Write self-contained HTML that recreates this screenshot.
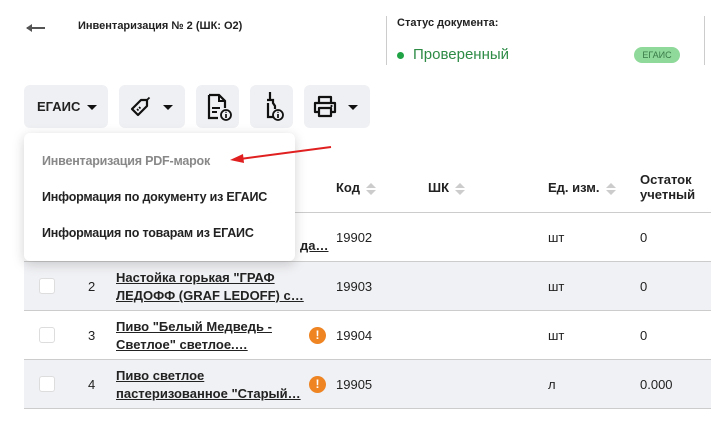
<!DOCTYPE html>
<html><head><meta charset="utf-8"><style>
*{box-sizing:border-box;margin:0;padding:0}
body{width:711px;height:437px;background:#fff;font-family:"Liberation Sans",sans-serif;color:#222;position:relative;overflow:hidden;font-size:13px}
.a{position:absolute}
.btn{position:absolute;top:85px;height:43px;background:#eff0f3;border-radius:6px}
.caret{position:absolute;width:0;height:0;border-left:5px solid transparent;border-right:5px solid transparent;border-top:5px solid #111}
.row{position:absolute;left:24px;width:687px;height:49px;border-bottom:1px solid #ccc}
.cb{position:absolute;left:15px;top:16px;width:16px;height:16px;border:1px solid #ddd;border-radius:3px;background:#fff}
.num{position:absolute;left:64px;top:17px}
.nm{position:absolute;left:92px;top:7px;font-weight:bold;text-decoration:underline;line-height:18px;width:190px;white-space:nowrap;overflow:hidden}
.ex{position:absolute;left:285px;top:16px;width:17px;height:17px;border-radius:50%;background:#ee8422;color:#fff;font-weight:bold;font-size:12px;text-align:center;line-height:17px}
.c1{position:absolute;left:312px;top:17px}
.c2{position:absolute;left:524px;top:17px}
.c3{position:absolute;left:616px;top:17px}
.sort{display:inline-block;vertical-align:middle;margin-left:6px;width:10px;height:12px;position:relative}
.sort:before{content:"";position:absolute;top:0;left:0;border-left:5px solid transparent;border-right:5px solid transparent;border-bottom:5px solid #ccc}
.sort:after{content:"";position:absolute;bottom:0;left:0;border-left:5px solid transparent;border-right:5px solid transparent;border-top:5px solid #ccc}
.mi{position:absolute;left:18px;font-size:12.5px;font-weight:bold;color:#222;letter-spacing:-0.2px}
</style></head><body>
<div class="a" style="left:27px;top:27px;width:18px;height:2px;background:#555"></div>
<div class="a" style="left:26px;top:24px;width:0;height:0;border-top:4px solid transparent;border-bottom:4px solid transparent;border-right:6px solid #555"></div>
<div class="a" style="left:78px;top:20px;font-size:11px;font-weight:bold">Инвентаризация № 2 (ШК: О2)</div>
<div class="a" style="left:386px;top:16px;width:1px;height:49px;background:#ccc"></div>
<div class="a" style="left:704px;top:16px;width:1px;height:49px;background:#ccc"></div>
<div class="a" style="left:397px;top:17px;font-size:11px;font-weight:bold">Статус документа:</div>
<div class="a" style="left:397px;top:52px;width:7px;height:7px;border-radius:50%;background:#1fa345"></div>
<div class="a" style="left:413px;top:46px;font-size:15px;color:#2e8b46">Проверенный</div>
<div class="a" style="left:634px;top:47px;width:46px;height:16px;border-radius:8px;background:#8fd99a;color:#3a7a48;font-size:9px;text-align:center;line-height:16px">ЕГАИС</div>

<div class="btn" style="left:24px;width:84px"><span class="a" style="left:13px;top:14px;font-weight:bold;font-size:13px">ЕГАИС</span><div class="caret" style="left:63px;top:20px"></div></div>
<div class="btn" style="left:119px;width:66px">
<svg class="a" style="left:8px;top:9px" width="26" height="26" viewBox="0 0 26 26"><path d="M14 6h6v6l-9 9-6-6z" fill="none" stroke="#111" stroke-width="2.2" stroke-linejoin="round"/><path d="M19 7l3.5-3.5" stroke="#111" stroke-width="1.8"/><path d="M10 15l1.5 1.5M12 13l1.5 1.5" stroke="#111" stroke-width="1.6"/></svg>
<div class="caret" style="left:44px;top:20px"></div></div>
<div class="btn" style="left:196px;width:43px">
<svg class="a" style="left:9px;top:8px" width="28" height="28" viewBox="0 0 28 28"><path d="M4 2h10l6 6v7M4 2v23h9" fill="none" stroke="#111" stroke-width="2.2"/><path d="M14 2v6h6" fill="none" stroke="#111" stroke-width="2"/><path d="M7 15h8M7 19h5" stroke="#111" stroke-width="2"/><circle cx="21" cy="22" r="5" fill="none" stroke="#111" stroke-width="1.8"/><path d="M21 21v4M21 18.8v1" stroke="#111" stroke-width="1.7"/></svg></div>
<div class="btn" style="left:250px;width:43px">
<svg class="a" style="left:11px;top:5px" width="26" height="32" viewBox="0 0 26 32"><path d="M9 2v7M6 10h6v3l2 3v3M7 13v14h6" fill="none" stroke="#111" stroke-width="2.2"/><circle cx="17" cy="25" r="5" fill="none" stroke="#111" stroke-width="1.8"/><path d="M17 24v4M17 21.8v1" stroke="#111" stroke-width="1.7"/></svg></div>
<div class="btn" style="left:304px;width:66px">
<svg class="a" style="left:8px;top:9px" width="26" height="26" viewBox="0 0 26 26"><path d="M7 8V3h12v5M7 18H3V9h20v9h-4M7 14h12v8H7z" fill="none" stroke="#111" stroke-width="2.2" stroke-linejoin="round"/><circle cx="19.5" cy="12" r="1.1" fill="#111"/></svg>
<div class="caret" style="left:44px;top:20px"></div></div>

<div class="a" style="left:336px;top:180px;font-weight:bold">Код<span class="sort"></span></div>
<div class="a" style="left:428px;top:180px;font-weight:bold">ШК<span class="sort"></span></div>
<div class="a" style="left:548px;top:180px;font-weight:bold">Ед. изм.<span class="sort"></span></div>
<div class="a" style="left:640px;top:172px;font-weight:bold;line-height:15px">Остаток<br>учетный</div>
<div class="a" style="left:24px;top:212px;width:687px;height:1px;background:#ccc"></div>

<div class="row" style="top:213px;background:#fff"><div class="nm" style="top:24px;left:276px;width:30px">да…</div><div class="c1">19902</div><div class="c2">шт</div><div class="c3">0</div></div>
<div class="row" style="top:262px;background:#f0f1f4"><div class="cb"></div><div class="num">2</div><div class="nm">Настойка горькая "ГРАФ<br>ЛЕДОФФ (GRAF LEDOFF) с…</div><div class="c1">19903</div><div class="c2">шт</div><div class="c3">0</div></div>
<div class="row" style="top:311px;background:#fff"><div class="cb"></div><div class="num">3</div><div class="nm">Пиво "Белый Медведь -<br>Светлое" светлое.…</div><div class="ex">!</div><div class="c1">19904</div><div class="c2">шт</div><div class="c3">0</div></div>
<div class="row" style="top:360px;background:#f0f1f4"><div class="cb"></div><div class="num">4</div><div class="nm">Пиво светлое<br>пастеризованное "Старый…</div><div class="ex">!</div><div class="c1">19905</div><div class="c2">л</div><div class="c3">0.000</div></div>

<div class="a" style="left:24px;top:133px;width:271px;height:128px;background:#fff;border-radius:6px;box-shadow:0 3px 12px rgba(0,0,0,.18)">
<div class="mi" style="top:21px;color:#888">Инвентаризация PDF-марок</div>
<div class="mi" style="top:57px">Информация по документу из ЕГАИС</div>
<div class="mi" style="top:93px">Информация по товарам из ЕГАИС</div>
</div>
<svg class="a" style="left:225px;top:142px" width="110" height="25" viewBox="0 0 110 25"><path d="M106 5L15 17" stroke="#e02020" stroke-width="2"/><path d="M5 18l13-6 1 9z" fill="#e02020"/></svg>
</body></html>
